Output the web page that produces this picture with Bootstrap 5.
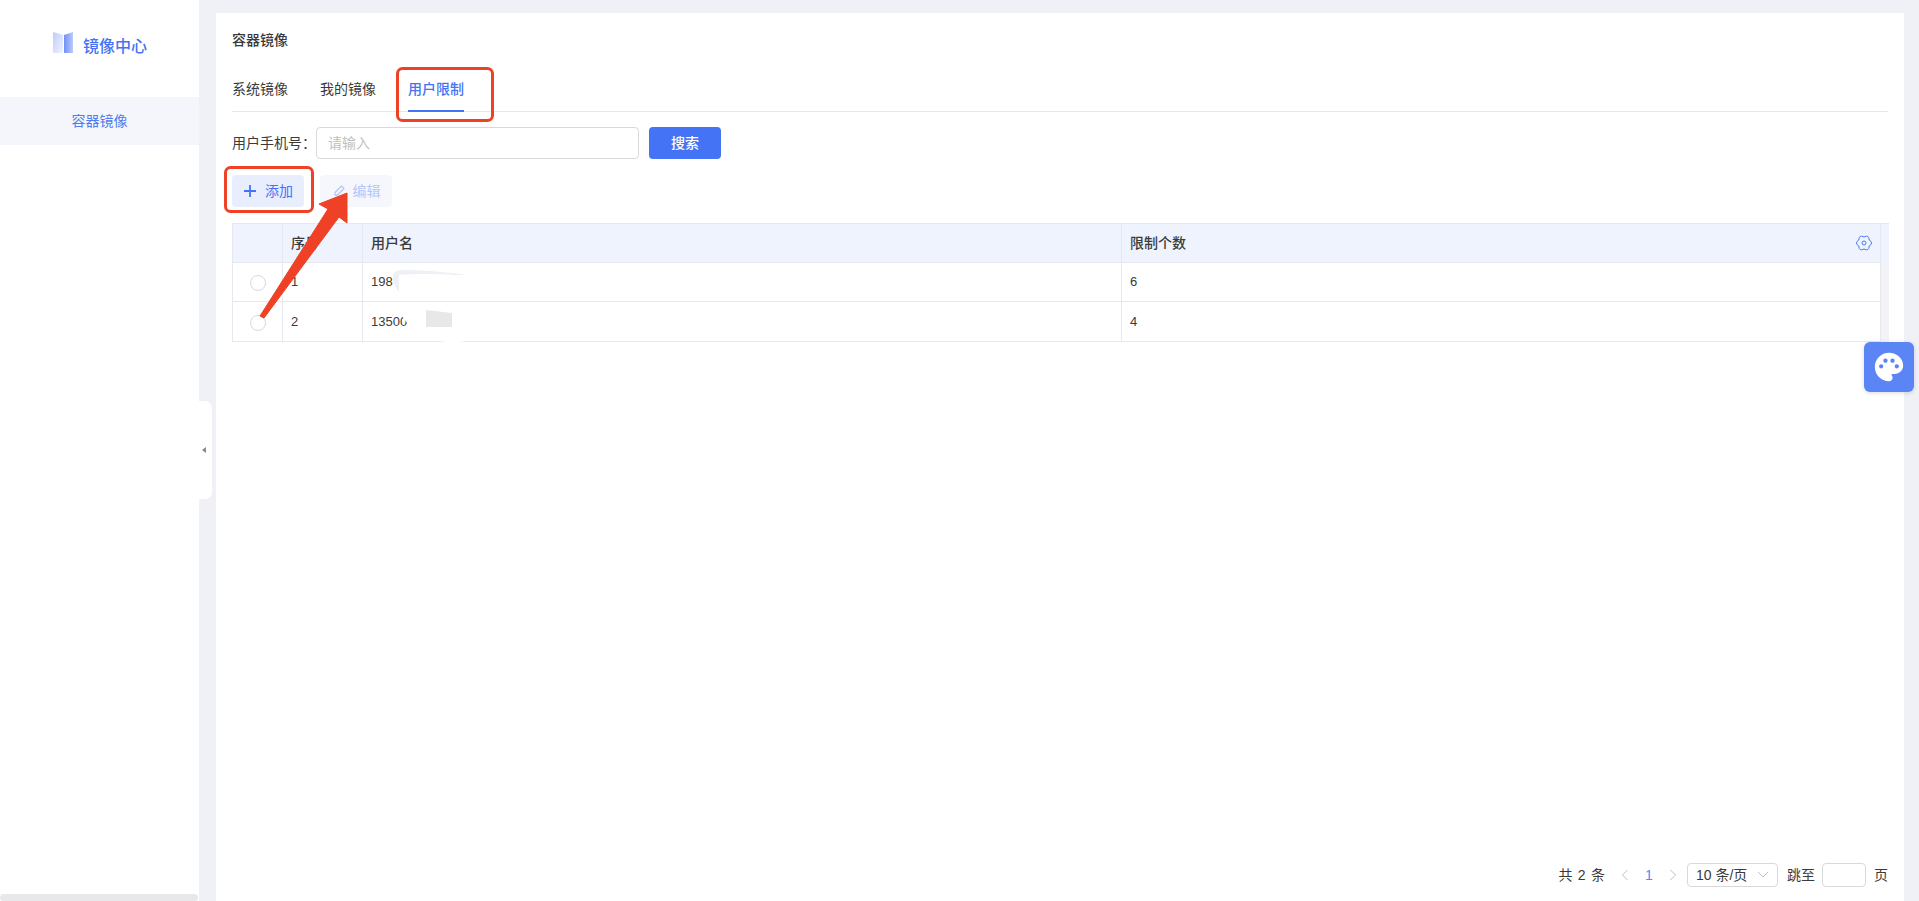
<!DOCTYPE html>
<html lang="zh-CN">
<head>
  <meta charset="UTF-8" />
  <meta name="viewport" content="width=device-width, initial-scale=1" />
  <title>容器镜像 - 镜像中心</title>
  <link href="https://cdn.jsdelivr.net/npm/bootstrap@5.3.2/dist/css/bootstrap.min.css" rel="stylesheet" />
  <style>
    html, body { height: 100%; overflow: hidden; }
    body {
      font-family: "Liberation Sans", "Noto Sans CJK SC", sans-serif;
      background: #f0f1f6; color: #3a3a3a; font-size: 14px; position: relative;
    }
    .page-shell { height: 901px; }

    .side-panel { width: 199px; background: #fff; position: relative; flex: none; }
    .logo-row { height: 97px; padding: 32px 0 0 53px; }
    .logo-text { color: #4573f5; font-size: 16px; font-weight: 500; line-height: 24px; margin-left: 10px; margin-top: 3px; }
    .side-item { height: 48px; background: #f5f6fb; color: #4f7bf0; line-height: 48px; text-align: center; }
    .side-scroll { position: absolute; left: 0; right: 1px; bottom: 0; height: 7px; border-radius: 4px; background: #e8e8ea; }
    .side-handle {
      position: absolute; left: 199px; top: 401px; width: 13px; height: 98px; background: #fff;
      border-radius: 0 7px 7px 0; z-index: 2;
    }
    .side-handle::after {
      content: ""; position: absolute; left: 3px; top: 46px;
      border: 3px solid transparent; border-left: 0; border-right: 4px solid #888;
    }

    .main-area { padding: 13px 15px 0 17px; min-width: 0; }
    .main-panel { background: #fff; height: 100%; padding: 17px 16px 0; }
    .page-title { font-size: 14px; font-weight: 500; line-height: 20px; margin: 0 0 20px; color: #3a3a3a; }

    .tab-bar { height: 42px; border-bottom: 1px solid #e8e8ec; gap: 32px; flex-wrap: nowrap; }
    .tab-bar .nav-link { padding: 0; height: 42px; line-height: 38px; color: #3a3a3a; }
    .tab-bar .nav-link.active { color: #4573f5; font-weight: 500; border-bottom: 2px solid #4573f5; }

    .filter-row { margin-top: 15px; height: 32px; }
    .filter-label { width: 84px; font-size: 14px; white-space: nowrap; }
    .filter-input {
      width: 323px; height: 32px; font-size: 14px; border: 1px solid #d9d9d9; border-radius: 4px;
      padding: 0 11px; color: #333; box-shadow: none;
    }
    .filter-input::placeholder { color: #bfbfbf; }
    .btn-search {
      width: 72px; height: 32px; margin-left: 10px; padding: 0; font-size: 14px; font-weight: 500;
      background: #4573f5; border: 0; border-radius: 4px; color: #fff;
    }

    .tool-row { margin-top: 16px; gap: 16px; }
    .btn-tool {
      width: 72px; height: 32px; padding: 0; border: 0; border-radius: 4px; font-size: 14px;
      display: flex; align-items: center; justify-content: center; gap: 8px;
    }
    .btn-tool-add, .btn-tool-add:hover { background: #e8eefd; color: #4573f5; }
    .btn-tool-edit, .btn-tool-edit:disabled { background: #f6f7fd; color: #b4c6fa; opacity: 1; gap: 7px; }

    .data-table { width: 1656px; margin: 16px 0 0; table-layout: fixed; border-collapse: collapse; font-size: 13px; }
    .data-table > :not(caption) > * > * {
      padding: 0 8px; border: 1px solid #e6e8f0; box-shadow: none; color: #3a3a3a; vertical-align: middle;
      background: transparent;
    }
    .data-table thead th { height: 39px; background: #eef3fd; font-size: 14px; font-weight: 500; }
    .data-table tbody td { height: 39px; }
    .data-table tbody tr:last-child td { height: 40px; }
    .data-table .gutter-cell { padding: 0; border: 0; background: #f3f3f7; }
    .data-table thead .gutter-cell { background: #eef3fd; border: 0; border-top: 1px solid #e6e8f0; }
    .data-table .form-check-input { margin: 3px 0 0; width: 16px; height: 16px; border-color: #d9d9d9; }

    .pager { height: 24px; margin-top: auto; margin-bottom: 14px; font-size: 14px; color: #3a3a3a; white-space: nowrap; }
    .pager-total { word-spacing: 1.5px; }
    .pager-arrow { width: 24px; text-align: center; line-height: 0; }
    .pager-current { width: 24px; text-align: center; color: #4a90f5; font-weight: 500; }
    .pager-size {
      width: 91px; height: 24px; border: 1px solid #d9d9d9; border-radius: 4px; padding: 0 8px;
      margin-left: 2px; margin-right: 9px;
    }
    .pager-jump { width: 44px; height: 24px; border: 1px solid #d9d9d9; border-radius: 4px; margin: 0 8px 0 7px; }

    .theme-btn {
      position: absolute; left: 1864px; top: 342px; width: 50px; height: 50px; border-radius: 6px;
      background: #5b85f5; box-shadow: 0 1px 4px rgba(0, 0, 0, .15); z-index: 3;
    }
    .mark-layer { position: absolute; left: 0; top: 0; z-index: 4; pointer-events: none; }
  </style>
</head>
<body>
  <div class="page-shell d-flex">
    <aside class="side-panel">
      <div class="logo-row d-flex align-items-start">
        <svg width="20" height="22" viewBox="0 0 20 22">
          <defs>
            <linearGradient id="pageLeft" x1="0" y1="0" x2="1" y2="1">
              <stop offset="0" stop-color="#bccbfa" />
              <stop offset="1" stop-color="#f1f4fe" />
            </linearGradient>
            <linearGradient id="pageRight" x1="0" y1="0" x2="1" y2="0">
              <stop offset="0" stop-color="#6f90f6" />
              <stop offset="1" stop-color="#bccbfb" />
            </linearGradient>
          </defs>
          <polygon points="0,0 10,3 10,21 0,21" fill="url(#pageLeft)" />
          <polygon points="11,3 20,0 20,21 11,21" fill="url(#pageRight)" />
        </svg>
        <span class="logo-text">镜像中心</span>
      </div>
      <div class="side-item">容器镜像</div>
      <div class="side-scroll"></div>
    </aside>
    <div class="side-handle"></div>

    <main class="main-area flex-grow-1">
      <div class="main-panel d-flex flex-column">
        <h1 class="page-title">容器镜像</h1>

        <ul class="nav tab-bar">
          <li class="nav-item"><a class="nav-link" href="#">系统镜像</a></li>
          <li class="nav-item"><a class="nav-link" href="#">我的镜像</a></li>
          <li class="nav-item"><a class="nav-link active" href="#">用户限制</a></li>
        </ul>

        <div class="filter-row d-flex align-items-center">
          <label class="filter-label" for="phone">用户手机号：</label>
          <input id="phone" class="form-control filter-input" placeholder="请输入" />
          <button class="btn btn-search">搜索</button>
        </div>

        <div class="tool-row d-flex">
          <button class="btn btn-tool btn-tool-add">
            <svg width="14" height="14" viewBox="0 0 14 14"><path d="M7 1v12M1 7h12" stroke="#4573f5" stroke-width="1.800" fill="none" /></svg>
            添加
          </button>
          <button class="btn btn-tool btn-tool-edit" disabled>
            <svg width="14" height="14" viewBox="0 0 14 14"><path d="M9.500 2l2.500 2.500-6.500 6.500H3V8.500z" stroke="#b4c6fa" stroke-width="1.300" stroke-linejoin="round" fill="none" /></svg>
            编辑
          </button>
        </div>

        <table class="table data-table">
          <colgroup>
            <col style="width: 50px" />
            <col style="width: 80px" />
            <col style="width: 759px" />
            <col style="width: 759px" />
            <col style="width: 8px" />
          </colgroup>
          <thead>
            <tr>
              <th></th>
              <th>序号</th>
              <th>用户名</th>
              <th>
                <div class="d-flex justify-content-between align-items-center">
                  <span>限制个数</span>
                  <svg width="16" height="16" viewBox="0 0 16 16">
                    <path d="M13.200 5Q18 8 13.200 11Q13 16.660 8 14Q3 16.660 2.800 11Q-2 8 2.800 5Q3 -.66 8 2Q13 -.66 13.200 5Z" fill="none" stroke="#4f7bf0" stroke-width="1" />
                    <circle cx="8" cy="8" r="2" fill="none" stroke="#4f7bf0" stroke-width="1" />
                  </svg>
                </div>
              </th>
              <th class="gutter-cell"></th>
            </tr>
          </thead>
          <tbody>
            <tr>
              <td class="text-center"><input class="form-check-input" type="radio" name="pick" /></td>
              <td>1</td>
              <td>198</td>
              <td>6</td>
              <td class="gutter-cell"></td>
            </tr>
            <tr>
              <td class="text-center"><input class="form-check-input" type="radio" name="pick" /></td>
              <td>2</td>
              <td>13500</td>
              <td>4</td>
              <td class="gutter-cell"></td>
            </tr>
          </tbody>
        </table>

        <div class="pager d-flex justify-content-end align-items-center">
          <span class="pager-total me-2">共 2 条</span>
          <span class="pager-arrow"><svg width="8" height="12" viewBox="0 0 8 12"><path d="M6.500 1L1.500 6l5 5" stroke="#bfbfbf" fill="none" /></svg></span>
          <span class="pager-current">1</span>
          <span class="pager-arrow"><svg width="8" height="12" viewBox="0 0 8 12"><path d="M1.500 1l5 5-5 5" stroke="#bfbfbf" fill="none" /></svg></span>
          <div class="pager-size d-flex justify-content-between align-items-center">
            <span>10 条/页</span>
            <svg width="12" height="8" viewBox="0 0 12 8"><path d="M1 1l5 5 5-5" stroke="#bfbfbf" fill="none" /></svg>
          </div>
          <span>跳至</span>
          <div class="pager-jump"></div>
          <span>页</span>
        </div>
      </div>
    </main>
  </div>

  <div class="theme-btn d-flex align-items-center justify-content-center">
    <svg width="34" height="34" viewBox="0 0 24 24"><path fill="#fff" d="M12 2C6.490 2 2 6.490 2 12s4.490 10 10 10c1.380 0 2.500-1.120 2.500-2.500 0-.61-.23-1.200-.64-1.670-.08-.1-.13-.21-.13-.33 0-.28.22-.5.5-.5H16c3.310 0 6-2.690 6-6 0-4.960-4.490-9-10-9zm-5.500 11c-.83 0-1.500-.67-1.500-1.500S5.670 10 6.500 10 8 10.670 8 11.500 7.330 13 6.500 13zm3-4C8.670 9 8 8.330 8 7.500S8.670 6 9.500 6s1.500.67 1.500 1.500S10.330 9 9.500 9zm5 0c-.83 0-1.500-.67-1.500-1.500S13.670 6 14.500 6s1.500.67 1.500 1.500S15.330 9 14.500 9zm3 4c-.83 0-1.500-.67-1.500-1.500s.67-1.500 1.500-1.500 1.500.67 1.500 1.500-.67 1.500-1.500 1.500z" /></svg>
  </div>

  <!-- annotations drawn over the screenshot: red boxes, arrow, phone number smudges -->
  <svg class="mark-layer" width="1919" height="901" viewBox="0 0 1919 901">
    <path d="M393 276c0-4 4-6 10-6 22 0 44 2 64 5l-50 3-12 18c-7-3-12-10-12-20z" fill="#eef0f6" />
    <path d="M399 275c20-2 50-1 70 1l8 20-78 0z" fill="#fff" />
    <path d="M401 314c8-6 24-7 40-5 18 2 28 14 35 26-4 6-14 8-30 7-22-2-39-16-45-28z" fill="#fff" />
    <path d="M426 310l26 3v14h-26z" fill="#e8e8e8" />
    <rect x="397.500" y="68.500" width="95" height="52" rx="5" fill="none" stroke="#ee4125" stroke-width="3" />
    <rect x="225.500" y="167.500" width="87" height="44" rx="5" fill="none" stroke="#ee4125" stroke-width="3" />
    <polygon points="260,316 264,318 339,217 347,223 347,193 319,204 328,209" fill="#ee4125" stroke="#ee4125" stroke-linejoin="round" />
  </svg>

  <script src="https://cdn.jsdelivr.net/npm/bootstrap@5.3.2/dist/js/bootstrap.bundle.min.js"></script>
</body>
</html>
